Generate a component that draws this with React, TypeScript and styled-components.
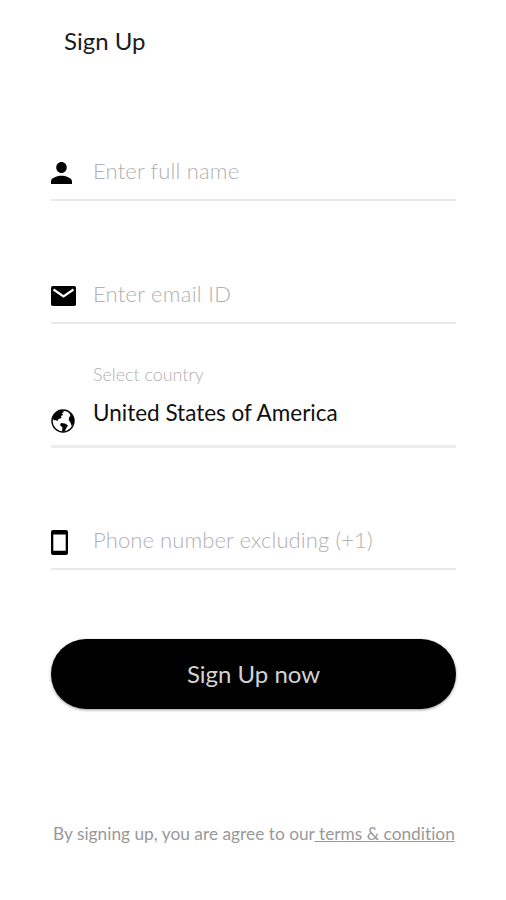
import React from "react";
import styled, { createGlobalStyle } from "styled-components";

const Global = createGlobalStyle`
  * { box-sizing: border-box; }
  body { margin: 0; background: #fff; }
`;

const Screen = styled.main`
  width: 506px;
  height: 900px;
  padding: 0 50px 0 51px;
  display: flex;
  flex-direction: column;
  background: #fff;
  font-family: Lato, sans-serif;
  font-variant-ligatures: none;
  overflow: hidden;
`;

const Title = styled.h1`
  margin: 26px 0 0 13px;
  height: 51px;
  font-size: 24px;
  font-weight: 400;
  line-height: 30px;
  color: #1c1c1c;
`;

const Form = styled.form`
  display: flex;
  flex-direction: column;
`;

const Field = styled.label<{ $height: number; $inset?: number; $line?: string; $thickness?: number }>`
  height: ${({ $height }) => $height}px;
  display: grid;
  grid-template-columns: 42px 1fr;
  grid-template-rows: 1fr 32px;
  padding-bottom: ${({ $inset = 13, $thickness = 2 }) => $inset - $thickness}px;
  border-bottom: ${({ $thickness = 2 }) => $thickness}px solid ${({ $line = "#e8e8e8" }) => $line};
  color: #000;
`;

const Caption = styled.span`
  grid-column: 2;
  align-self: end;
  margin-bottom: 17px;
  font-size: 17.9px;
  font-weight: 300;
  line-height: 22px;
  color: #b0b0b0;
`;

const IconSlot = styled.span<{ $drop?: number }>`
  grid-column: 1;
  grid-row: 2;
  display: flex;
  align-items: center;
  padding-top: ${({ $drop = 3 }) => $drop}px;
  svg { display: block; fill: currentColor; }
`;

const Input = styled.input<{ $spacing?: number; $lift?: number; $size?: number }>`
  grid-column: 2;
  grid-row: 2;
  width: 100%;
  padding: 0 0 ${({ $lift = 0 }) => $lift * 2}px;
  border: 0;
  outline: 0;
  background: transparent;
  font: 400 ${({ $size = 22 }) => $size}px/28px Lato, sans-serif;
  font-variant-ligatures: none;
  letter-spacing: ${({ $spacing = 0 }) => $spacing}px;
  color: #101010;
  &::placeholder { color: #b0b0b0; font-weight: 300; opacity: 1; }
`;

const SubmitButton = styled.button`
  margin-top: 69px;
  height: 70px;
  border: 0;
  border-radius: 35px;
  background: #000;
  box-shadow: 0 1px 3px rgba(0, 0, 0, 0.4);
  color: #d2d2d2;
  font: 400 24px/30px Lato, sans-serif;
`;

const Terms = styled.p`
  margin: 113px 0 0 2px;
  font-size: 17.32px;
  line-height: 24px;
  white-space: pre;
  color: #999;
`;

const TermsLink = styled.a`
  text-decoration: underline;
  text-decoration-skip-ink: none;
`;

const PersonIcon = () => (
  <svg width="21" height="22" viewBox="4 4 16 16" preserveAspectRatio="none" aria-hidden="true">
    <path d="M12 12c2.21 0 4-1.79 4-4s-1.79-4-4-4-4 1.79-4 4 1.79 4 4 4zm0 2c-2.67 0-8 1.34-8 4v2h16v-2c0-2.66-5.33-4-8-4z" />
  </svg>
);
const MailIcon = () => (
  <svg width="25" height="20" viewBox="0 0 25 20" aria-hidden="true">
    <rect width="25" height="20" rx="1.8" />
    <path d="m2.5 3.5 10 7 10-7" fill="none" stroke="#fff" strokeWidth="2.2" />
  </svg>
);
const GlobeIcon = () => (
  <svg width="24" height="24" viewBox="0 0 24 24" aria-hidden="true">
    <circle cx="12" cy="12" r="11" fill="none" stroke="currentColor" strokeWidth="1.4" />
    <path d="M3 6 7 2.5l5-1 1 1.5-2 1 1 2-2 1 .5 2-3 1-1 2-2-1-1 .5-2-2z" />
    <path d="m10 14 4 .5 3 2-2 3-1 3h-3l.5-4-2.5-2.5z" />
    <path d="m18 3 2.5 2 2.2 4.5v4.5l-2 3-1.5-4-1.5-2 .5-3 1.3-1z" />
  </svg>
);
const PhoneIcon = () => (
  <svg width="17" height="25" viewBox="0 0 17 25" aria-hidden="true">
    <path
      fillRule="evenodd"
      d="M2 0h13a2 2 0 0 1 2 2v21a2 2 0 0 1-2 2H2a2 2 0 0 1-2-2V2a2 2 0 0 1 2-2zm.3 4.5v16.2h12.4V4.5z"
    />
  </svg>
);

export default function App() {
  return (
    <>
      <Global />
      <Screen>
        <Title>Sign Up</Title>
        <Form>
          <Field $height={124} $inset={14}>
            <IconSlot><PersonIcon /></IconSlot>
            <Input placeholder="Enter full name" $spacing={0.17} />
          </Field>
          <Field $height={123}>
            <IconSlot $drop={2}><MailIcon /></IconSlot>
            <Input placeholder="Enter email ID" $spacing={0.25} $lift={1} />
          </Field>
          <Field $height={124} $inset={14} $thickness={3} $line="#ececec">
            <Caption>Select country</Caption>
            <IconSlot $drop={5}><GlobeIcon /></IconSlot>
            <Input defaultValue="United States of America" $size={22.5} $lift={5} />
          </Field>
          <Field $height={122}>
            <IconSlot><PhoneIcon /></IconSlot>
            <Input placeholder="Phone number excluding (+1)" $spacing={0.1} $lift={1} />
          </Field>
          <SubmitButton type="button">Sign Up now</SubmitButton>
        </Form>
        <Terms>
          By signing up, you are agree to our<TermsLink> terms &amp; condition</TermsLink>
        </Terms>
      </Screen>
    </>
  );
}
